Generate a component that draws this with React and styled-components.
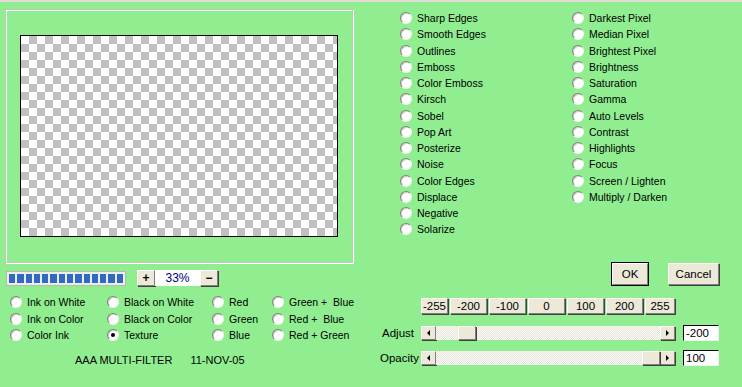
import React from 'react';
import styled, { createGlobalStyle, css } from 'styled-components';

const GlobalStyle = createGlobalStyle`
  html, body {
    margin: 0;
    padding: 0;
    background: #90ee90;
  }
  * {
    box-sizing: border-box;
  }
`;

const leftFilters = [
  'Sharp Edges', 'Smooth Edges', 'Outlines', 'Emboss', 'Color Emboss', 'Kirsch', 'Sobel',
  'Pop Art', 'Posterize', 'Noise', 'Color Edges', 'Displace', 'Negative', 'Solarize',
];

const rightFilters = [
  'Darkest Pixel', 'Median Pixel', 'Brightest Pixel', 'Brightness', 'Saturation', 'Gamma',
  'Auto Levels', 'Contrast', 'Highlights', 'Focus', 'Screen / Lighten', 'Multiply / Darken',
];

const modes = [
  'Ink on White', 'Black on White', 'Red', 'Green +  Blue',
  'Ink on Color', 'Black on Color', 'Green', 'Red +  Blue',
  'Color Ink', 'Texture', 'Blue', 'Red + Green',
];

const presets = [
  { label: '-255', w: 27 },
  { label: '-200', w: 37 },
  { label: '-100', w: 37 },
  { label: '0', w: 37 },
  { label: '100', w: 37 },
  { label: '200', w: 37 },
  { label: '255', w: 30 },
];

const Radio = ({ label, checked }) => (
  <RadioRow>
    <RadioDot $checked={checked} />
    <span>{label}</span>
  </RadioRow>
);

const ScrollBar = ({ value, min, max }) => {
  const travel = 224 - 18;
  const left = Math.round(((value - min) / (max - min)) * travel);
  return (
    <Scroll>
      <ArrowBtn><Tri $dir='left' /></ArrowBtn>
      <Track>
        <Thumb style={{ left }} />
      </Track>
      <ArrowBtn><Tri $dir='right' /></ArrowBtn>
    </Scroll>
  );
};

const App = () => {
  const blocks = Array.from({ length: 14 });
  return (
    <>
      <GlobalStyle />
      <Window>
        <LeftCol>
          <Frame>
            <Preview />
          </Frame>

          <ProgressRow>
            <Progress>
              {blocks.map((_, i) => (
                <Block key={i} />
              ))}
            </Progress>
            <Zoom>
              <SmallBtn>+</SmallBtn>
              <ZoomValue>33%</ZoomValue>
              <SmallBtn>−</SmallBtn>
            </Zoom>
          </ProgressRow>

          <ModeGrid>
            {modes.map((m) => (
              <Radio key={m} label={m} checked={m === 'Texture'} />
            ))}
          </ModeGrid>

          <Footer>
            <span>AAA MULTI-FILTER</span>
            <span>11-NOV-05</span>
          </Footer>
        </LeftCol>

        <RightCol>
          <FilterLists>
            <FilterList $width={172}>
              {leftFilters.map((f) => (
                <Radio key={f} label={f} />
              ))}
            </FilterList>
            <FilterList>
              {rightFilters.map((f) => (
                <Radio key={f} label={f} />
              ))}
            </FilterList>
          </FilterLists>

          <DialogButtons>
            <Button $default $w={36}>OK</Button>
            <Button $w={51}>Cancel</Button>
          </DialogButtons>

          <PresetRow>
            {presets.map((p) => (
              <Button key={p.label} $w={p.w} $h={16}>{p.label}</Button>
            ))}
          </PresetRow>

          <SliderRow $top={11}>
            <SliderLabel>Adjust</SliderLabel>
            <ScrollBar value={-200} min={-255} max={255} />
            <ValueBox>-200</ValueBox>
          </SliderRow>
          <SliderRow $top={9}>
            <SliderLabel>Opacity</SliderLabel>
            <ScrollBar value={100} min={0} max={100} />
            <ValueBox>100</ValueBox>
          </SliderRow>
        </RightCol>
      </Window>
    </>
  );
};

export default App;

const Window = styled.div`
  width: 742px;
  height: 387px;
  overflow: hidden;
  background: #90ee90;
  border-top: 2px solid #e4dcd6;
  display: grid;
  grid-template-columns: 380px 1fr;
  font-family: 'Liberation Sans', Arial, sans-serif;
  font-size: 10.5px;
  color: #000;
`;

const LeftCol = styled.div`
  display: flex;
  flex-direction: column;
`;

const Frame = styled.div`
  margin: 7px 0 0 5px;
  width: 348px;
  height: 254px;
  border: 1px solid #c4c4bc;
  box-shadow: inset 1px 1px 0 #ffffff, 1px 1px 0 #ffffff;
  padding: 25px 0 0 14px;
`;

const Preview = styled.div`
  width: 318px;
  height: 202px;
  border: 1px solid #000;
  background: repeating-conic-gradient(#c0c0c0 0 25%, #ffffff 0 50%) 0 0 / 16px 16px;
`;

const ProgressRow = styled.div`
  display: flex;
  align-items: center;
  margin-top: 7px;
  padding-left: 6px;
`;

const Progress = styled.div`
  width: 120px;
  height: 15px;
  border: 1px solid #b8b8b0;
  background: #eeeeea;
  padding: 2px 2px;
  display: flex;
  gap: 2px;
`;

const Block = styled.div`
  flex: 1;
  background: #316ac5;
`;

const Zoom = styled.div`
  display: flex;
  margin-left: 11px;
  height: 17px;
`;

const raised = css`
  background: #ece9d8;
  border: 1px solid;
  border-color: #ffffff #808080 #808080 #ffffff;
  box-shadow: 1px 1px 0 #404040;
`;

const SmallBtn = styled.div`
  ${raised};
  width: 18px;
  height: 16px;
  display: flex;
  align-items: center;
  justify-content: center;
  font-weight: bold;
  font-size: 12px;
`;

const ZoomValue = styled.div`
  width: 45px;
  height: 16px;
  background: #fff;
  color: #000080;
  display: flex;
  align-items: center;
  justify-content: center;
  font-size: 12px;
`;

const ModeGrid = styled.div`
  display: grid;
  grid-template-columns: 97px 105px 60px auto;
  grid-auto-rows: 16.5px;
  margin-top: 7px;
  padding-left: 10px;
`;

const RadioRow = styled.div`
  display: flex;
  align-items: center;
  gap: 5px;
  white-space: pre;
  height: 100%;
`;

const RadioDot = styled.span`
  width: 12px;
  height: 12px;
  flex: none;
  border-radius: 50%;
  background: #fff;
  border: 1px solid;
  border-color: #808080 #f4f4f4 #f4f4f4 #808080;
  box-shadow: inset 1px 1px 0 #d4d0c8;
  display: flex;
  align-items: center;
  justify-content: center;
  &::after {
    content: '';
    width: 4px;
    height: 4px;
    border-radius: 50%;
    background: ${({ $checked }) => ($checked ? '#000' : 'transparent')};
  }
`;

const Footer = styled.div`
  display: flex;
  gap: 18px;
  padding-left: 75px;
  margin-top: 8px;
  line-height: 16px;
  font-size: 11px;
`;

const RightCol = styled.div`
  display: flex;
  flex-direction: column;
`;

const FilterLists = styled.div`
  display: flex;
  padding: 8px 0 0 20px;
  height: 261px;
`;

const FilterList = styled.div`
  width: ${({ $width }) => ($width ? `${$width}px` : 'auto')};
  display: grid;
  grid-auto-rows: 16.25px;
  align-content: start;
`;

const DialogButtons = styled.div`
  display: flex;
  justify-content: flex-end;
  gap: 20px;
  padding-right: 23px;
`;

const Button = styled.div`
  ${raised};
  width: ${({ $w }) => $w}px;
  height: ${({ $h }) => $h || 22}px;
  display: flex;
  align-items: center;
  justify-content: center;
  font-size: 11.5px;
  ${({ $default }) =>
    $default &&
    css`
      outline: 1px solid #000;
    `}
`;

const PresetRow = styled.div`
  display: flex;
  gap: 2px;
  margin: 13px 0 0 41px;
`;

const SliderRow = styled.div`
  display: flex;
  align-items: center;
  margin-top: ${({ $top }) => $top}px;
  height: 16px;
`;

const SliderLabel = styled.div`
  width: 34px;
  text-align: right;
  margin-right: 7px;
  font-size: 11.5px;
`;

const Scroll = styled.div`
  width: 254px;
  height: 14px;
  display: flex;
`;

const ArrowBtn = styled.div`
  ${raised};
  width: 15px;
  height: 14px;
  flex: none;
  display: flex;
  align-items: center;
  justify-content: center;
`;

const Tri = styled.span`
  width: 0;
  height: 0;
  border-top: 3px solid transparent;
  border-bottom: 3px solid transparent;
  ${({ $dir }) =>
    $dir === 'left'
      ? css`border-right: 3px solid #000;`
      : css`border-left: 3px solid #000;`}
`;

const Track = styled.div`
  position: relative;
  flex: 1;
  background: repeating-conic-gradient(#e6e4da 0 25%, #fbfbf8 0 50%) 0 0 / 2px 2px;
`;

const Thumb = styled.div`
  ${raised};
  position: absolute;
  top: 0;
  width: 18px;
  height: 14px;
`;

const ValueBox = styled.div`
  width: 36px;
  height: 16px;
  margin-left: 8px;
  background: #fff;
  border: 1px solid;
  border-color: #000 #f0f0f0 #f0f0f0 #000;
  padding-left: 2px;
  line-height: 14px;
  font-size: 11.5px;
`;
